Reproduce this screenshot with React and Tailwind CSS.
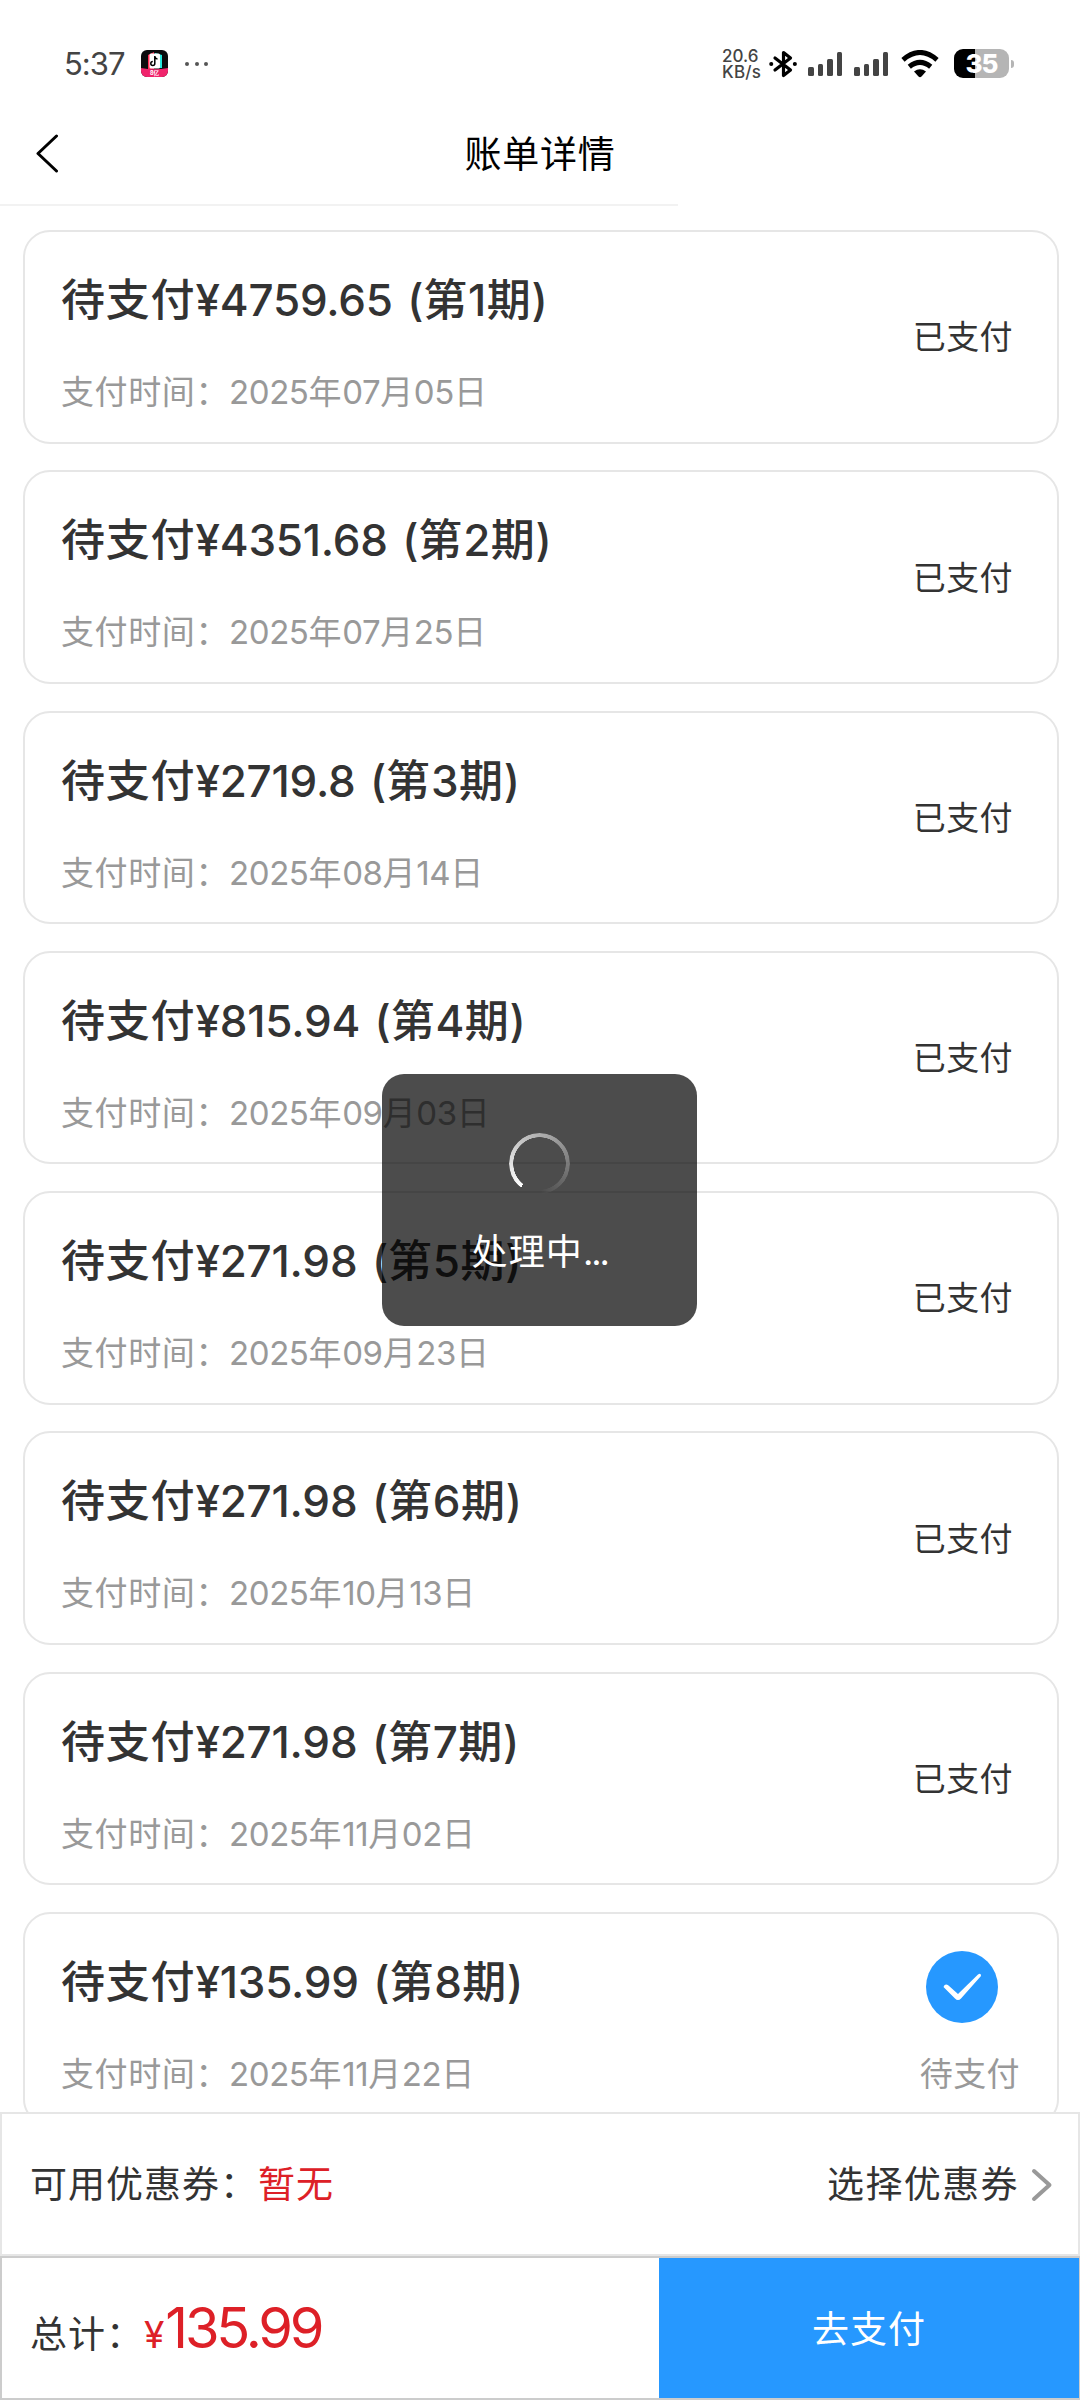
import React from 'react';

const bills = [
  { term: 1, amount: '4759.65', date: ['2025', '07', '05'], paid: true },
  { term: 2, amount: '4351.68', date: ['2025', '07', '25'], paid: true },
  { term: 3, amount: '2719.8', date: ['2025', '08', '14'], paid: true },
  { term: 4, amount: '815.94', date: ['2025', '09', '03'], paid: true },
  { term: 5, amount: '271.98', date: ['2025', '09', '23'], paid: true },
  { term: 6, amount: '271.98', date: ['2025', '10', '13'], paid: true },
  { term: 7, amount: '271.98', date: ['2025', '11', '02'], paid: true },
  { term: 8, amount: '135.99', date: ['2025', '11', '22'], paid: false },
];

function SignalBars() {
  return (
    <div className="flex h-[25px] items-end gap-[4px]">
      <div className="h-[9px] w-[5.5px] rounded-[1.5px] bg-[#444]" />
      <div className="h-[12px] w-[5.5px] rounded-[1.5px] bg-[#444]" />
      <div className="h-[17px] w-[5.5px] rounded-[1.5px] bg-[#444]" />
      <div className="h-[24px] w-[5.5px] rounded-[1.5px] bg-[#444]" />
    </div>
  );
}

function StatusBar() {
  return (
    <div className="flex h-[102px] shrink-0 items-center justify-between pt-[25px] pr-[66px] pl-[64px]">
      <div className="flex items-center">
        <span className="w-[77px] text-[31px] leading-[32px] tracking-[-1px] text-[#444]">5:37</span>

        {/* Running app */}
        <svg width="27" height="27" viewBox="0 0 27 27">
          <defs>
            <clipPath id="app">
              <rect width="27" height="27" rx="6" />
            </clipPath>
          </defs>
          <g clipPath="url(#app)">
            <rect width="27" height="27" fill="#0b0b0d" />
            <path d="M7 5l6-3v17H7z" fill="#fe2c55" />
            <path d="M14 3l7 2v13h-7z" fill="#25e6dc" />
            <rect x="8.500" y="3.500" width="10.500" height="15" rx="1.500" fill="#fff" />
            <path d="M13.800 6v7.500a2 2 0 1 1-2-2M13.800 6.500q.6 2.300 2.700 2.500" fill="none" stroke="#000" strokeWidth="1.500" />
            <path d="M0 18q13.500 2.500 27 0v9H0z" fill="#f0246c" />
          </g>
          <text x="13.500" y="25" textAnchor="middle" fontSize="5.500" fontWeight="700" fill="#fff">8亿</text>
        </svg>

        <div className="ml-[17px] flex gap-[5.5px]">
          <div className="size-[4px] rounded-full bg-[#555]" />
          <div className="size-[4px] rounded-full bg-[#555]" />
          <div className="size-[4px] rounded-full bg-[#555]" />
        </div>
      </div>

      <div className="flex items-center">
        <div className="w-[47px] text-[17px] leading-[16px] font-medium text-[#444]">
          <div>20.6</div>
          <div className="tracking-[0.2px]">KB/s</div>
        </div>
        <svg width="28" height="28" viewBox="0 0 28 28" className="mr-[11px]" fill="none" stroke="#000" strokeWidth="3.200" strokeLinecap="round" strokeLinejoin="round">
          <path d="M6 8L21.500 20 14.500 25.500V2.500L21.500 8 6 20" />
          <path d="M2.200 14h.1M25.800 14h.1" strokeWidth="4" />
        </svg>
        <SignalBars />
        <div className="w-[12px]" />
        <SignalBars />
        <svg width="38" height="28" viewBox="0 0 38 28" className="ml-[13px]">
          <g fill="none" stroke="#000" strokeWidth="5">
            <path d="M2 9.800Q19-4.800 36 9.800" />
            <path d="M8.300 16.800Q19 8 29.700 16.800" />
          </g>
          <path d="M13 21.500Q19 17 25 21.500L20.500 26.500Q19 28 17.500 26.500Z" fill="#000" />
        </svg>
        <div className="ml-[15px] flex items-center gap-[1.5px]">
          <div className="flex h-[29px] w-[55px] items-center justify-center rounded-[9px] bg-[linear-gradient(90deg,#000_39%,#b5b5b5_39%)] text-[26px] leading-[29px] font-extrabold tracking-[-1px] text-white">
            35
          </div>
          <div className="h-[8px] w-[3.5px] rounded-r-full bg-[#b5b5b5]" />
        </div>
      </div>
    </div>
  );
}

function Header() {
  return (
    <div className="h-[104px] shrink-0">
      <div className="grid h-[102px] grid-cols-[120px_1fr_120px] items-center">
        <svg width="24" height="40" viewBox="0 0 24 40" className="ml-[35px]" fill="none" stroke="#000" strokeWidth="3" strokeLinecap="round" strokeLinejoin="round">
          <path d="M21.500 3L3 20.500 21.500 38" />
        </svg>
        <div className="pt-[3px] text-center text-[37px] leading-[50px] tracking-[0.8px] text-black">账单详情</div>
      </div>
      <div className="h-[2px] w-[678px] bg-[#f2f2f2]" />
    </div>
  );
}

function BillCard({ bill }) {
  const [year, month, day] = bill.date;

  return (
    <div className="flex h-[213.5px] shrink-0 justify-between rounded-[27px] border-2 border-[#e6e6e6] pr-[36px] pl-[36px]">
      <div>
        <div className="mt-[40px] text-[44px] leading-[56px] font-medium tracking-[0.8px] whitespace-nowrap text-[#333]">
          待支付<span className="tracking-[-0.2px] [word-spacing:3px]">¥{bill.amount} (</span>第<span className="tracking-[0.4px]">{bill.term}</span>期)
        </div>
        <div className="mt-[42px] text-[33px] leading-[44px] tracking-[0.6px] whitespace-nowrap text-[#999]">
          支付时间：<span className="tracking-[-0.4px]">{year}</span>年<span className="tracking-[-0.4px]">{month}</span>月<span className="tracking-[-0.4px]">{day}</span>日
        </div>
      </div>

      {bill.paid ? (
        <div className="mr-[8px] self-center pt-[1px] text-[33px] leading-[44px] tracking-[0.4px] text-[#333]">已支付</div>
      ) : (
        <div className="flex flex-col items-center pt-[37px] pr-[1px]">
          <svg width="72" height="72" viewBox="0 0 72 72" className="mr-[15px]">
            <circle cx="36" cy="36" r="36" fill="#2698ff" />
            <path d="M17.500 36q1.500-4 5-1.500l9.500 8.500L52 23.500q3-2 3 1.500L35 47.500q-3 3-6 0z" fill="#fff" />
          </svg>
          <div className="mt-[29px] text-[33px] leading-[44px] tracking-[0.4px] text-[#999]">待支付</div>
        </div>
      )}
    </div>
  );
}

function BottomBar() {
  return (
    <div className="h-[288px] shrink-0 bg-white text-[37px] leading-[50px] tracking-[1px] text-[#333]">
      {/* Coupon */}
      <div className="flex h-[144px] items-center justify-between border-2 border-[#e6e6e6] pt-[2px] pr-[25px] pl-[28px]">
        <div>
          可用优惠券：<span className="text-[#dd2027]">暂无</span>
        </div>
        <div className="flex items-center tracking-[1.4px]">
          选择优惠券
          <svg width="22" height="36" viewBox="0 0 22 36" className="ml-[12px]" fill="none" stroke="#999" strokeWidth="4" strokeLinecap="round" strokeLinejoin="round">
            <path d="M3 4L18.500 18 3 32" />
          </svg>
        </div>
      </div>

      {/* Total */}
      <div className="flex h-[144px] items-stretch border-2 border-r-1 border-[#ccc]">
        <div className="flex w-[657px] items-baseline pt-[40px] pl-[28px]">
          <span>总计：</span>
          <span className="text-[#dd2027]">¥</span>
          <span className="text-[56px] leading-[60px] tracking-[-3.2px] text-[#dd2027]">135.99</span>
        </div>
        <div className="flex flex-1 items-center justify-center bg-[#2698ff] pt-[3px] text-white">去支付</div>
      </div>
    </div>
  );
}

function LoadingToast() {
  return (
    <div className="absolute top-[1074px] left-[382px] flex h-[252px] w-[315px] flex-col items-center rounded-[22px] bg-black/70 pt-[59px]">
      <div className="size-[61px] rounded-full bg-[conic-gradient(from_218deg,#fff,#fff0_320deg)] [mask:radial-gradient(closest-side,#0000_26px,#000_26.5px)]" />
      <div className="mt-[33px] text-[36px] leading-[50px] tracking-[1.2px] text-white">
        处理中<span className="tracking-[-2.2px]">...</span>
      </div>
    </div>
  );
}

function App() {
  return (
    <div className="relative flex h-[2400px] w-[1080px] flex-col overflow-hidden bg-white font-['Inter','Noto_Sans_CJK_SC',sans-serif]">
      <StatusBar />
      <Header />
      <div className="flex flex-1 flex-col gap-[26.8px] overflow-hidden pt-[24px] pr-[21px] pl-[23px]">
        {bills.map((bill) => (
          <BillCard key={bill.term} bill={bill} />
        ))}
      </div>
      <BottomBar />
      <LoadingToast />
    </div>
  );
}

export default App;
